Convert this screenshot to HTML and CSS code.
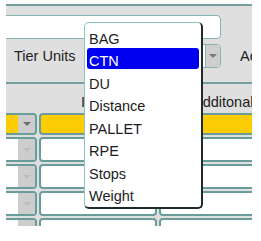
FILE: index.html
```html
<!DOCTYPE html>
<html lang="en">
<head>
  <meta charset="UTF-8">
  <title>Tier Units</title>
  <meta name="viewport" content="width=device-width, initial-scale=1">
  <link rel="stylesheet" href="styles.css">
</head>
<body>
  <div class="screen">
    <div class="panel">
      <div class="field-row">
        <div class="text-field"></div>
      </div>

      <div class="units-row">
        <span class="label">Tier Units</span>
        <div class="combo">
          <div class="combo-value"></div>
          <div class="combo-btn"><span class="arrow"></span></div>
        </div>
        <span class="label-next">Active</span>
      </div>

      <!-- block header -->
      <div class="grid-head">
        <div class="hcell col1"></div>
        <div class="hcell col2">Item</div>
        <div class="hcell col3">Additonal Charge</div>
      </div>

      <div class="grid">
        <div class="grid-row current">
          <div class="cell col1"><div class="cell-value"></div><div class="cell-btn"><span class="arrow"></span></div></div>
          <div class="cell col2"></div>
          <div class="cell col3"></div>
        </div>
        <div class="grid-row">
          <div class="cell col1"><div class="cell-value"></div><div class="cell-btn"><span class="arrow"></span></div></div>
          <div class="cell col2"></div>
          <div class="cell col3"></div>
        </div>
        <div class="grid-row">
          <div class="cell col1"><div class="cell-value"></div><div class="cell-btn"><span class="arrow"></span></div></div>
          <div class="cell col2"></div>
          <div class="cell col3"></div>
        </div>
        <div class="grid-row">
          <div class="cell col1"><div class="cell-value"></div><div class="cell-btn"><span class="arrow"></span></div></div>
          <div class="cell col2"></div>
          <div class="cell col3"></div>
        </div>
        <div class="grid-row">
          <div class="cell col1"><div class="cell-value"></div><div class="cell-btn"><span class="arrow"></span></div></div>
          <div class="cell col2"></div>
          <div class="cell col3"></div>
        </div>
      </div>
    </div>

    <!-- open list of values for Tier Units -->
    <ul class="popup">
      <li>BAG</li>
      <li class="selected">CTN</li>
      <li>DU</li>
      <li>Distance</li>
      <li>PALLET</li>
      <li>RPE</li>
      <li>Stops</li>
      <li>Weight</li>
    </ul>
  </div>
</body>
</html>
```

FILE: styles.css
```css
body {
  margin: 0;
  background: #fff;
  font-family: "Liberation Sans", Arial, sans-serif;
  font-size: 14.5px;
  color: #222;
}
.screen {
  position: relative;
  width: 261px;
  height: 241px;
  padding: 4px 9px 0 6px;
  box-sizing: border-box;
}
.panel {
  height: 222px;
  overflow: hidden;
  background: #dfdfdf;
  border-top: 2px solid #729f9f;
  box-sizing: border-box;
}
/* top text field */
.field-row {
  padding-top: 9px;
}
.text-field {
  margin-left: -10px;
  width: 225px;
  height: 24px;
  background: #fff;
  border: 1.5px solid #86b4b4;
  border-radius: 4px;
  box-sizing: border-box;
}
/* Tier Units row */
.units-row {
  display: flex;
  align-items: center;
  margin-top: 5px;
  height: 24px;
  white-space: nowrap;
}
.label {
  flex-shrink: 0;
  width: 80px;
  padding-left: 8px;
  box-sizing: border-box;
}
.label-next {
  flex-shrink: 0;
  margin-left: 19px;
}
.combo {
  display: flex;
  width: 135px;
  height: 24px;
  flex-shrink: 0;
  background: #fff;
  border: 1.5px solid #86b4b4;
  border-radius: 4px;
  box-sizing: border-box;
  overflow: hidden;
}
.combo-value {
  flex: 1;
}
.combo-btn {
  width: 14px;
  background: #cfcfcf;
  border-left: 1px solid #86b4b4;
  display: flex;
  align-items: center;
  justify-content: center;
}
.arrow {
  width: 0;
  height: 0;
  border-left: 4px solid transparent;
  border-right: 4px solid transparent;
  border-top: 4px solid #7a7a7a;
}
/* multi-record block */
.grid-head {
  display: flex;
  gap: 2px;
  margin-top: 14px;
  margin-left: -10px;
  height: 31px;
  border-top: 2px solid #729f9f;
  box-sizing: border-box;
  white-space: nowrap;
}
.hcell {
  padding-top: 10px;
  line-height: 17px;
  box-sizing: border-box;
  flex-shrink: 0;
}
.col1 { width: 41px; }
.col2 { width: 118px; }
.col3 { width: 141px; }
.hcell.col2 { padding-left: 42px; }
.hcell.col3 { padding-left: 34px; }
.grid {
  display: flex;
  flex-direction: column;
  gap: 2px;
  margin-left: -10px;
}
.grid-row {
  display: flex;
  gap: 2px;
  height: 25px;
}
.grid-row.current {
  height: 22px;
}
.cell {
  flex-shrink: 0;
  background: #fff;
  border: 2px solid #6a9c9c;
  border-radius: 4px;
  box-sizing: border-box;
  overflow: hidden;
}
.grid-row.current .cell {
  background: #fccc05;
}
.cell.col1 {
  display: flex;
}
.cell-value {
  flex: 1;
}
.cell-btn {
  width: 17px;
  background: #cdcdcd;
  display: flex;
  align-items: center;
  justify-content: center;
}
.cell-btn .arrow {
  border-top-color: #bcbcbc;
}
.grid-row.current .cell-btn .arrow {
  border-top-color: #6e6e6e;
}
/* popup list */
.popup {
  position: absolute;
  left: 84px;
  top: 22px;
  width: 119px;
  height: 187px;
  margin: 0;
  padding: 2.5px 0 0;
  list-style: none;
  background: #fff;
  border: 1px solid #8cc4c4;
  border-right: 2px solid #1f2b2b;
  border-bottom: 2px solid #1f2b2b;
  border-radius: 5px;
  box-sizing: border-box;
  color: #1c1c1c;
}
.popup li {
  height: 21px;
  margin: 0 2px 1.57px 2px;
  padding: 3px 0 0 2px;
  line-height: 21px;
  box-sizing: border-box;
  white-space: nowrap;
}
.popup li.selected {
  background: #0000f0;
  color: #fff;
  border-radius: 3px;
}
```
